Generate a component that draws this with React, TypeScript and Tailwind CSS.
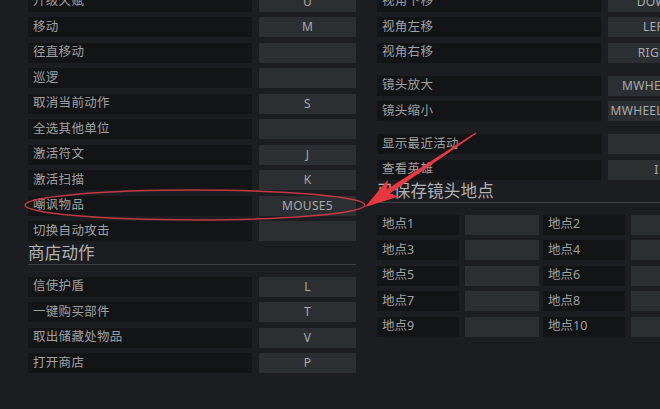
const leftRows: [string, string][] = [
  ["升级天赋", "U"],
  ["移动", "M"],
  ["径直移动", ""],
  ["巡逻", ""],
  ["取消当前动作", "S"],
  ["全选其他单位", ""],
  ["激活符文", "J"],
  ["激活扫描", "K"],
  ["嘲讽物品", "MOUSE5"],
  ["切换自动攻击", ""],
];

const shopRows: [string, string][] = [
  ["信使护盾", "L"],
  ["一键购买部件", "T"],
  ["取出储藏处物品", "V"],
  ["打开商店", "P"],
];

const cameraGroups: [string, string][][] = [
  [
    ["视角下移", "DOWN"],
    ["视角左移", "LEFT"],
    ["视角右移", "RIGHT"],
  ],
  [
    ["镜头放大", "MWHEELUP"],
    ["镜头缩小", "MWHEELDOWN"],
  ],
  [
    ["显示最近活动", ""],
    ["查看英雄", "I"],
  ],
];

function Row({ label, keyName }: { label: string; keyName: string }) {
  return (
    <div className="flex h-[20px] shrink-0 gap-[7px]">
      <div className="flex w-[224px] shrink-0 items-center bg-[#131416] pl-[5px] text-[12.5px] tracking-[0.3px] text-[#9fa1a3]">
        {label}
      </div>
      <div className="flex w-[97px] shrink-0 items-center justify-center bg-[#2c2f32] text-[12px] tracking-[0.3px] text-[#a8aaac]">
        {keyName}
      </div>
    </div>
  );
}

function Header({ title }: { title: string }) {
  return (
    <div className="flex h-[23px] shrink-0 items-end border-b border-[#3e4144] text-[16.5px] leading-[22px] tracking-[0.2px] text-[#b0b2b4]">
      {title}
    </div>
  );
}

function Spot({ n }: { n: number }) {
  return (
    <div className="flex gap-[6px]">
      <div className="flex w-[82px] items-center bg-[#131416] pl-[5px] text-[12.5px] text-[#9fa1a3]">
        地点{n}
      </div>
      <div className="w-[74px] bg-[#2c2f32]" />
    </div>
  );
}

export default function App() {
  return (
    <div
      className="relative h-[409px] w-[660px] overflow-hidden bg-[#1c1d21]"
      style={{ fontFamily: '"Noto Sans", "Noto Sans CJK SC", sans-serif' }}
    >
      <div className="flex">
        {/* hotkeys, left */}
        <div className="ml-[28px] mt-[-8.5px] flex w-[328px] shrink-0 flex-col">
          <div className="flex flex-col gap-[5.5px]">
            {leftRows.map(([l, k]) => (
              <Row key={l} label={l} keyName={k} />
            ))}
          </div>
          <div className="mt-[0.5px]">
            <Header title="商店动作" />
          </div>
          <div className="mt-[12px] flex flex-col gap-[5.5px]">
            {shopRows.map(([l, k]) => (
              <Row key={l} label={l} keyName={k} />
            ))}
          </div>
        </div>

        {/* camera, right */}
        <div className="ml-[21px] mt-[-8.5px] flex w-[329px] shrink-0 flex-col">
          {cameraGroups.map((g, i) => (
            <div key={i} className={i === 0 ? "flex flex-col gap-[5.5px]" : "mt-[13px] flex flex-col gap-[5.5px]"}>
              {g.map(([l, k]) => (
                <Row key={l} label={l} keyName={k} />
              ))}
            </div>
          ))}
          <Header title="已保存镜头地点" />
          <div className="mt-[12px] flex flex-col gap-[5.5px]">
            {[1, 3, 5, 7, 9].map((n) => (
              <div key={n} className="flex h-[20px] gap-[4px]">
                <Spot n={n} />
                <Spot n={n + 1} />
              </div>
            ))}
          </div>
        </div>
      </div>

      {/* red annotation */}
      <svg className="pointer-events-none absolute inset-0" width="660" height="409">
        <ellipse cx="195" cy="205" rx="170" ry="15" fill="none" stroke="#c23843" strokeWidth="1.5" />
        <polygon
          points="365,207 399,196.4 389.8,193.5 476.4,133.6 475.6,132.4 387,189.3 387.8,179.8"
          fill="#e8383f"
        />
      </svg>
    </div>
  );
}
